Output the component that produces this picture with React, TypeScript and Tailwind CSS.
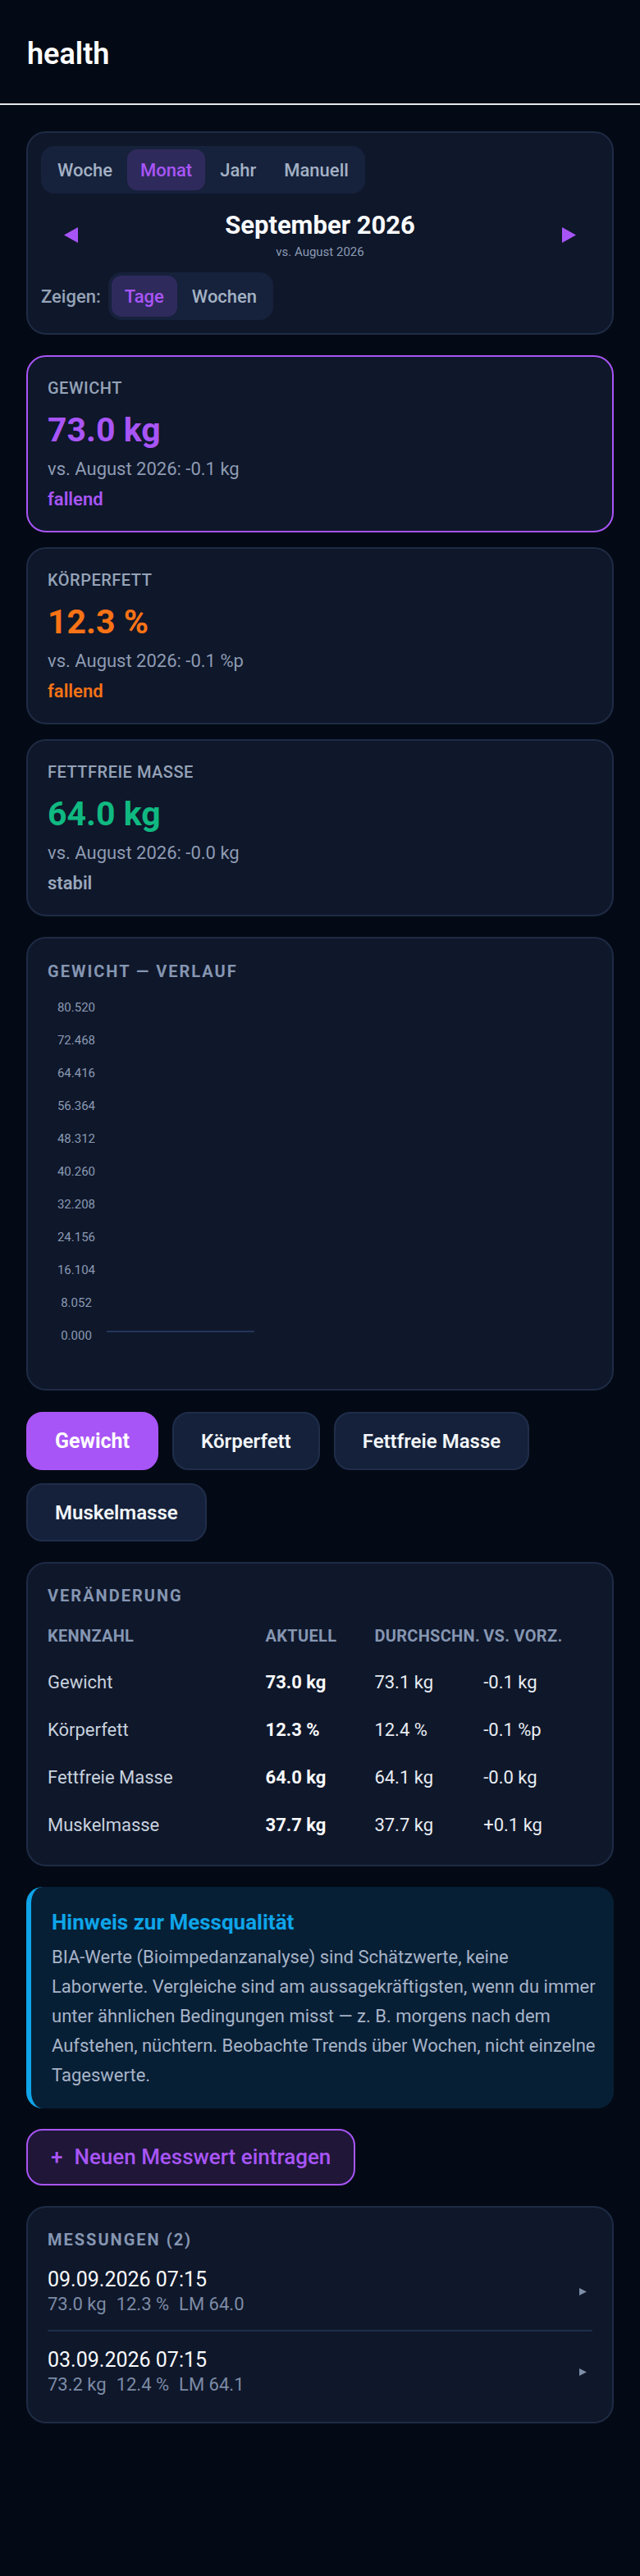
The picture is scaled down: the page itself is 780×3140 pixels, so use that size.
import React from "react";

const periods = ["Woche", "Monat", "Jahr", "Manuell"];

const metrics = [
  {
    label: "GEWICHT",
    value: "73.0 kg",
    delta: "vs. August 2026: -0.1 kg",
    trend: "fallend",
    valueClass: "text-[#a855f7]",
    trendClass: "text-[#a855f7]",
    active: true,
  },
  {
    label: "KÖRPERFETT",
    value: "12.3 %",
    delta: "vs. August 2026: -0.1 %p",
    trend: "fallend",
    valueClass: "text-[#f97316]",
    trendClass: "text-[#f97316]",
    active: false,
  },
  {
    label: "FETTFREIE MASSE",
    value: "64.0 kg",
    delta: "vs. August 2026: -0.0 kg",
    trend: "stabil",
    valueClass: "text-[#10b981]",
    trendClass: "text-[#9aa8bc]",
    active: false,
  },
];

const yTicks = ["80.520", "72.468", "64.416", "56.364", "48.312", "40.260", "32.208", "24.156", "16.104", "8.052", "0.000"];

const chartTabs = ["Gewicht", "Körperfett", "Fettfreie Masse", "Muskelmasse"];

const changes = [
  ["Gewicht", "73.0 kg", "73.1 kg", "-0.1 kg"],
  ["Körperfett", "12.3 %", "12.4 %", "-0.1 %p"],
  ["Fettfreie Masse", "64.0 kg", "64.1 kg", "-0.0 kg"],
  ["Muskelmasse", "37.7 kg", "37.7 kg", "+0.1 kg"],
];

const entries = [
  { date: "09.09.2026 07:15", parts: ["73.0 kg", "12.3 %", "LM 64.0"] },
  { date: "03.09.2026 07:15", parts: ["73.2 kg", "12.4 %", "LM 64.1"] },
];

function CardTitle({ children }: { children: React.ReactNode }) {
  return (
    <h2 className="text-[20px] leading-[30px] font-bold tracking-[0.1em] text-[#8596b2]">{children}</h2>
  );
}

function Chevron() {
  return (
    <svg width="9" height="9" viewBox="0 0 9 9" className="mr-[7px]">
      <polygon points="0,0 9,4.5 0,9" fill="#7f8ea8" />
    </svg>
  );
}

export default function App() {
  return (
    <div className="min-h-screen bg-[#040a15] font-[Roboto,'Noto_Sans',sans-serif] text-white pb-[40px]">
      <header className="h-[128px] border-b-2 border-[#e5e7eb] px-[33px] pt-[44px]">
        <h1 className="text-[36px] leading-[44px] font-semibold text-white">health</h1>
      </header>

      <main className="px-[32px] pt-[32px] flex flex-col gap-[25px]">
        {/* period selector */}
        <section className="rounded-[24px] border-2 border-[#1e2b45] bg-[#0f172a] p-[16px]">
          <div className="inline-flex gap-[2px] rounded-[16px] bg-[#16213b] p-[4px]">
            {periods.map((p) => (
              <button
                key={p}
                className={`h-[50px] px-[16px] rounded-[12px] text-[22px] font-medium ${
                  p === "Monat" ? "bg-[#2f2a5c] text-[#a855f7]" : "text-[#a3b1c4]"
                }`}
              >
                {p}
              </button>
            ))}
          </div>

          <div className="mt-[21px] flex items-center justify-between px-[28px]">
            <svg width="17" height="19" viewBox="0 0 17 19">
              <polygon points="17,0 0,9.5 17,19" fill="#a855f7" />
            </svg>
            <div className="flex flex-col items-center">
              <div className="text-[31px] leading-[36px] font-bold text-[#f8fafc]">September 2026</div>
              <div className="mt-[5px] text-[15px] leading-[18px] text-[#8b9bb4]">vs. August 2026</div>
            </div>
            <svg width="17" height="19" viewBox="0 0 17 19">
              <polygon points="0,0 17,9.5 0,19" fill="#a855f7" />
            </svg>
          </div>

          <div className="mt-[16px] flex items-center gap-[9px]">
            <span className="text-[22px] font-medium text-[#94a3b8]">Zeigen:</span>
            <div className="inline-flex gap-[2px] rounded-[16px] bg-[#16213b] p-[4px]">
              <button className="h-[50px] px-[16px] rounded-[12px] text-[22px] font-medium bg-[#2f2a5c] text-[#a855f7]">
                Tage
              </button>
              <button className="h-[50px] px-[16px] rounded-[12px] text-[22px] font-medium text-[#a3b1c4]">
                Wochen
              </button>
            </div>
          </div>
        </section>

        {/* metric cards */}
        <div className="flex flex-col gap-[18px]">
          {metrics.map((m) => (
            <section
              key={m.label}
              className={`rounded-[24px] border-2 bg-[#0f172a] px-[24px] pt-[24px] pb-[24px] ${
                m.active ? "border-[#a855f7]" : "border-[#1e2b45]"
              }`}
            >
              <div className="text-[20px] leading-[28px] font-medium tracking-[0.5px] text-[#94a3b8]">{m.label}</div>
              <div className={`mt-[13px] text-[41px] leading-[48px] font-bold ${m.valueClass}`}>{m.value}</div>
              <div className="mt-[10px] text-[22px] leading-[28px] text-[#8d9bb3]">{m.delta}</div>
              <div className={`mt-[9px] text-[22px] leading-[28px] font-semibold ${m.trendClass}`}>{m.trend}</div>
            </section>
          ))}
        </div>

        {/* chart */}
        <section className="rounded-[24px] border-2 border-[#1e2b45] bg-[#0f172a] px-[24px] pt-[25px] pb-[24px]">
          <CardTitle>GEWICHT — VERLAUF</CardTitle>
          <svg width="664" height="470" viewBox="0 0 664 470" className="block">
            {yTicks.map((t, i) => (
              <text
                key={t}
                x="35"
                y={34 + i * 40}
                textAnchor="middle"
                fontSize="15"
                fill="#8a9ab3"
                fontFamily="Roboto, sans-serif"
              >
                {t}
              </text>
            ))}
            <line x1="72" y1="424" x2="252" y2="424" stroke="#23355a" strokeWidth="2" />
          </svg>
        </section>

        {/* chart metric tabs */}
        <div className="mt-[1px] flex flex-wrap gap-x-[17px] gap-y-[16px]">
          {chartTabs.map((t, i) => (
            <button
              key={t}
              className={`h-[71px] px-[33px] rounded-[20px] border-2 ${
                i === 0
                  ? "bg-[#a855f7] border-[#a855f7] text-[25px] font-bold text-white"
                  : "bg-[#15213a] border-[#1f2d4a] text-[24px] font-semibold text-[#f1f5f9]"
              }`}
            >
              {t}
            </button>
          ))}
        </div>

        {/* changes table */}
        <section className="rounded-[24px] border-2 border-[#1e2b45] bg-[#0f172a] px-[24px] pt-[24px] pb-[20px]">
          <CardTitle>VERÄNDERUNG</CardTitle>
          <div className="mt-[20px] grid grid-cols-[2fr_1fr_1fr_1fr] text-[20px] leading-[28px] font-bold tracking-[0.3px] text-[#8596b2]">
            <div>KENNZAHL</div>
            <div>AKTUELL</div>
            <div className="whitespace-nowrap">DURCHSCHN.</div>
            <div className="whitespace-nowrap">VS. VORZ.</div>
          </div>
          <div className="mt-[13px]">
            {changes.map((r) => (
              <div key={r[0]} className="grid h-[58px] grid-cols-[2fr_1fr_1fr_1fr] items-center text-[22px]">
                <div className="text-[#c7d1de]">{r[0]}</div>
                <div className="font-bold text-[#f8fafc]">{r[1]}</div>
                <div className="text-[#e8edf3]">{r[2]}</div>
                <div className="text-[#e8edf3]">{r[3]}</div>
              </div>
            ))}
          </div>
        </section>

        {/* hint */}
        <section className="rounded-[20px] border-l-[6px] border-[#0ea5e9] bg-[#071f35] pl-[25px] pr-[20px] pt-[24px] pb-[22px]">
          <h3 className="text-[26px] leading-[38px] font-bold text-[#0ea5e9]">Hinweis zur Messqualität</h3>
          <p className="mt-[6px] text-[22px] leading-[36px] text-[#a7b4c8]">
            <span className="block whitespace-nowrap">BIA-Werte (Bioimpedanzanalyse) sind Schätzwerte, keine</span>
            <span className="block whitespace-nowrap">Laborwerte. Vergleiche sind am aussagekräftigsten, wenn du immer</span>
            <span className="block whitespace-nowrap">unter ähnlichen Bedingungen misst — z. B. morgens nach dem</span>
            <span className="block whitespace-nowrap">Aufstehen, nüchtern. Beobachte Trends über Wochen, nicht einzelne</span>
            <span className="block whitespace-nowrap">Tageswerte.</span>
          </p>
        </section>

        {/* add entry */}
        <button className="self-start h-[69px] flex items-center gap-[14px] rounded-[20px] border-2 border-[#a855f7] bg-[#1f1638] px-[28px] text-[26px] font-medium text-[#a855f7]">
          <span>+</span>
          <span>Neuen Messwert eintragen</span>
        </button>

        {/* entries */}
        <section className="rounded-[24px] border-2 border-[#1e2b45] bg-[#0f172a] px-[24px] pt-[24px] pb-[24px]">
          <CardTitle>MESSUNGEN (2)</CardTitle>
          {entries.map((e, i) => (
            <div
              key={e.date}
              className={`flex items-center justify-between ${
                i === 0 ? "pt-[18px] pb-[16px] border-b-2 border-[#1e2d4a]" : "pt-[19px] pb-[6px]"
              }`}
            >
              <div>
                <div className="text-[25px] leading-[31px] text-[#f8fafc]">{e.date}</div>
                <div className="flex gap-[12px] text-[22px] leading-[30px] text-[#7c8ba5]">
                  {e.parts.map((p) => (
                    <span key={p}>{p}</span>
                  ))}
                </div>
              </div>
              <Chevron />
            </div>
          ))}
        </section>
      </main>
    </div>
  );
}
